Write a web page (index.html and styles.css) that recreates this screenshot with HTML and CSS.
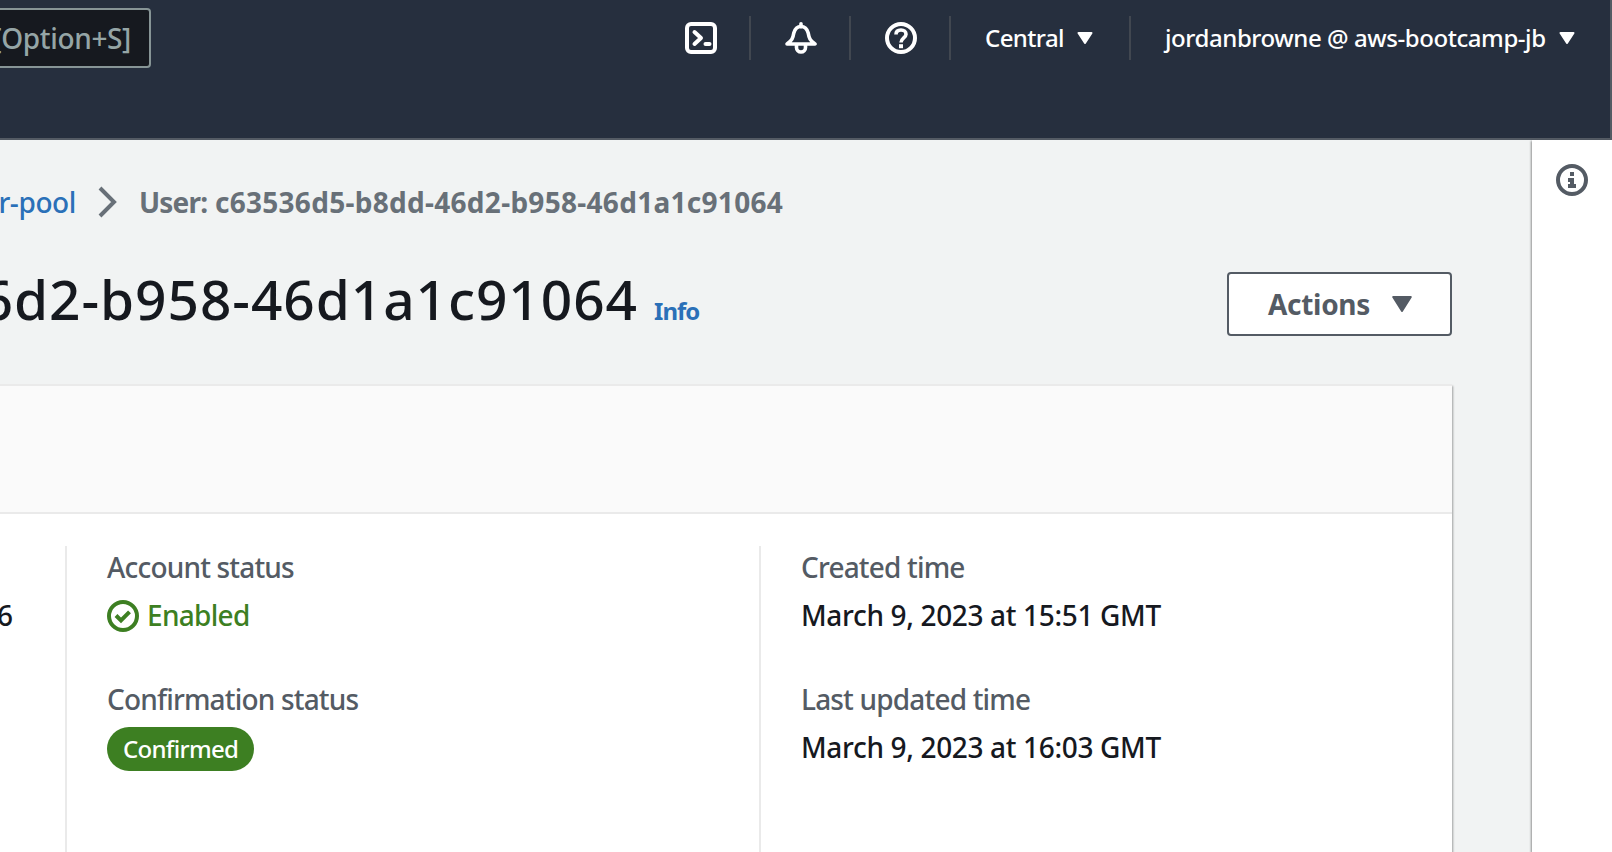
FILE: index.html
```html
<!DOCTYPE html>
<html lang="en">
<head>
<meta charset="utf-8">
<title>User pool user</title>
<link rel="stylesheet" href="styles.css">
</head>
<body>
<header class="topbar">
  <div class="search"><span class="search-hint">[Option+S]</span></div>
  <nav class="nav">
    <div class="nav-item nav-icon">
      <svg width="32" height="32" viewBox="0 0 32 32" fill="none" stroke="#fff" stroke-width="4" stroke-linejoin="round"><rect x="2" y="2" width="28" height="28" rx="4"/><path d="M9.500 10l6.500 6-6.500 6" stroke-linecap="round"/><path d="M20.500 22h4" stroke-linecap="round"/></svg>
    </div>
    <div class="nav-item nav-icon">
      <svg width="32" height="32" viewBox="0 0 32 32" fill="none" stroke="#fff" stroke-width="3.600" stroke-linejoin="round"><path d="M16 1.800v3" stroke-linecap="round"/><path d="M2 22c5-3.500 6-6 6.800-11C10 6.500 12.500 4.500 16 4.500s6 2 7.200 6.500c.8 5 1.800 7.500 6.800 11z"/><path d="M11.500 23v2.500a4.500 4.500 0 0 0 9 0V23"/></svg>
    </div>
    <div class="nav-item nav-icon">
      <svg width="32" height="32" viewBox="0 0 32 32" fill="none" stroke="#fff"><circle cx="16" cy="16" r="14" stroke-width="4"/><path d="M11 12.500C11 9.500 13 8 16 8s5 1.700 5 4.200c0 3.600-5 3.800-5 8.300" stroke-width="3.600"/><path d="M16 22.200v4" stroke-width="4"/></svg>
    </div>
    <div class="nav-item nav-region"><span class="region">Central</span>
      <svg width="16" height="12" viewBox="0 0 16 12"><path d="M1.500 1h13L8 11z" fill="#fff" stroke="#fff" stroke-width="2" stroke-linejoin="round"/></svg>
    </div>
    <div class="nav-item nav-account"><span class="account">jordanbrowne @ aws-bootcamp-jb</span>
      <svg width="16" height="12" viewBox="0 0 16 12"><path d="M1.500 1h13L8 11z" fill="#fff" stroke="#fff" stroke-width="2" stroke-linejoin="round"/></svg>
    </div>
  </nav>
</header>
<div class="body">
  <main class="main">
    <div class="crumbs">
      <div class="crumb-clip"><a class="crumb-link">r-pool</a></div>
      <svg class="chevron" width="20" height="32" viewBox="0 0 20 32"><path d="M2 2l14 14L2 30" fill="none" stroke="#687078" stroke-width="4"/></svg>
      <span class="crumb-current"><span class="crumb-kind">User:</span> c63536d5-b8dd-46d2-b958-46d1a1c91064</span>
    </div>
    <div class="heading">
      <div class="title-clip"><h1 class="title">6d2-b958-46d1a1c91064</h1></div>
      <a class="info">Info</a>
      <button class="actions"><span class="actions-label">Actions</span>
        <svg width="20" height="16" viewBox="0 0 20 16"><path d="M1.200 1h17.600L10 15z" fill="#545b64" stroke="#545b64" stroke-width="2" stroke-linejoin="round"/></svg>
      </button>
    </div>
    <section class="card">
      <div class="card-head"></div>
      <div class="card-body">
        <div class="col col-first">
          <div class="field"><div class="label">&nbsp;</div><div class="value">6</div></div>
        </div>
        <div class="col col-status">
          <div class="field"><div class="label">Account status</div>
            <div class="value status">
              <svg width="32" height="32" viewBox="0 0 32 32" fill="none" stroke="#3d7f22" stroke-width="4"><circle cx="16" cy="16" r="14"/><path d="M9 15.500l5 5 8.500-8.700"/></svg>
              <span class="enabled">Enabled</span></div></div>
          <div class="field"><div class="label">Confirmation status</div>
            <div class="value"><span class="badge">Confirmed</span></div></div>
        </div>
        <div class="col col-time">
          <div class="field"><div class="label">Created time</div><div class="value date">March 9, 2023 at 15:51 GMT</div></div>
          <div class="field"><div class="label">Last updated time</div><div class="value date">March 9, 2023 at 16:03 GMT</div></div>
        </div>
      </div>
    </section>
  </main>
  <aside class="drawer">
    <svg width="32" height="32" viewBox="0 0 32 32"><circle cx="16" cy="16" r="14" fill="none" stroke="#545b64" stroke-width="4"/><path d="M14 8h4v4h-4zM12 14h6v6h2v4h-8v-4h2v-2h-2z" fill="#545b64"/></svg>
  </aside>
</div>
</body>
</html>
```
FILE: styles.css
```css
* { box-sizing: border-box; }
body { margin: 0; width: 1612px; height: 852px; overflow: hidden; display: flex; flex-direction: column; font-family: "Noto Sans", sans-serif; font-size: 28px; font-weight: 500; line-height: 44px; color: #16191f; background: #f1f3f3; white-space: nowrap; }
svg { display: block; flex: none; }
.topbar { flex: none; height: 140px; display: flex; justify-content: space-between; align-items: flex-start; background: #262f3e; border-bottom: 2px solid #545b64; border-right: 2px solid #545b64; padding-top: 8px; }
.search { width: 151px; height: 60px; flex: none; display: flex; justify-content: flex-end; align-items: center; padding-right: 18px; overflow: hidden; background: #16191f; border: 2px solid #879596; border-left: 0; border-radius: 0 4px 4px 0; color: #95a5a6; }
.search-hint { letter-spacing: -.35px; }
.nav { display: flex; padding-top: 8px; color: #fff; font-size: 24px; font-weight: 500; }
.nav-item { height: 44px; display: flex; align-items: center; }
.nav-item + .nav-item { border-left: 2px solid #414750; }
.nav-icon { width: 100px; padding-left: 34px; padding-bottom: 1px; }
.nav-icon:first-child { width: 64px; padding-left: 0; }
.nav-region { width: 180px; padding-left: 34px; gap: 13px; }
.region { letter-spacing: -.6px; }
.nav-account { width: 481px; padding-left: 34px; gap: 13px; }
.account { letter-spacing: -.43px; }
.body { flex: 1; display: flex; min-height: 0; }
.main { width: 1532px; padding-top: 40px; }
.crumbs { display: flex; align-items: center; height: 44px; }
.crumb-clip { width: 76px; display: flex; justify-content: flex-end; overflow: hidden; padding-bottom: 1px; color: #2a70b8; }
.crumb-link { letter-spacing: -.4px; }
.chevron { margin-left: 22px; }
.crumb-current { margin-left: 21px; color: #687078; font-weight: 700; letter-spacing: .29px; }
.crumb-kind { letter-spacing: -.8px; }
.heading { display: flex; align-items: baseline; margin-top: 48px; height: 64px; }
.title-clip { width: 638px; height: 64px; display: flex; justify-content: flex-end; overflow: hidden; }
.title { margin: 0; font-size: 55px; line-height: 54px; font-weight: 500; letter-spacing: .95px; }
.info { margin-left: 16px; width: 559px; font-size: 24px; font-weight: 700; letter-spacing: -.95px; color: #2a70b8; }
.actions { align-self: flex-start; margin-left: 14px; width: 225px; height: 64px; display: flex; align-items: center; padding: 0 0 0 39px; gap: 22px; background: #fff; border: 2px solid #545b64; border-radius: 4px; font: 700 28px/44px "Noto Sans", sans-serif; color: #545b64; }
.actions-label { letter-spacing: -.3px; }
.card { width: 1452px; height: 480px; margin-top: 48px; background: #fff; border-top: 2px solid #eaeaea; box-shadow: 1px 2px 2px rgba(0, 0, 0, .35); }
.card-head { height: 128px; background: #fafafa; border-bottom: 2px solid #eaeaea; }
.card-body { display: flex; padding-top: 32px; }
.col { height: 320px; }
.col + .col { border-left: 2px solid #eaeaea; padding-left: 40px; }
.col-first { width: 65px; }
.col-status { width: 694px; }
.field { height: 132px; }
.label { height: 44px; line-height: 43px; color: #545b64; letter-spacing: -.82px; }
.value { margin-top: 4px; height: 44px; line-height: 43px; }
.col-first .value { margin-left: -3px; }
.status { display: flex; align-items: center; gap: 8px; color: #3d7f22; }
.enabled { height: 44px; letter-spacing: -.7px; }
.date { letter-spacing: -.34px; }
.badge { display: block; width: 147px; height: 44px; margin-top: 5px; padding-left: 16px; border-radius: 22px; background: #3d7f22; color: #fff; font-size: 24px; line-height: 44px; font-weight: 500; letter-spacing: -.7px; }
.drawer { width: 80px; background: #fff; box-shadow: -1px 1px 2px rgba(0, 0, 0, .4); padding: 24px 0 0 24px; }
```
